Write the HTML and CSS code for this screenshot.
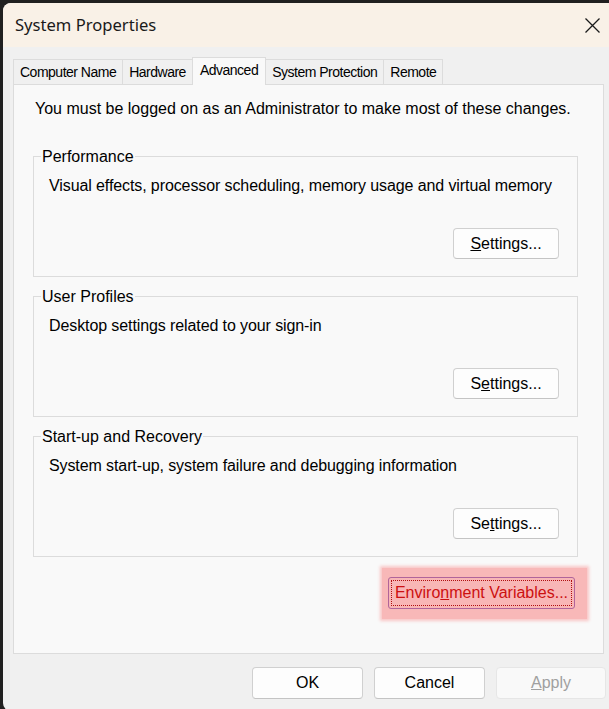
FILE: index.html
```html
<!DOCTYPE html>
<html>
<head>
<meta charset="utf-8">
<link rel="stylesheet" href="styles.css">
</head>
<body>
<div class="window">
  <div class="titlebar">
    <span class="title">System Properties</span>
    <span class="close">
      <svg width="15" height="15" viewBox="0 0 15 15"><path d="M0.5 0.5 L14.5 14.5 M14.5 0.5 L0.5 14.5" stroke="#1a1a1a" stroke-width="1.3" fill="none"/></svg>
    </span>
  </div>
  <div class="body">
    <div class="tabs">
      <div class="tab">Computer Name</div>
      <div class="tab">Hardware</div>
      <div class="tab selected">Advanced</div>
      <div class="tab">System Protection</div>
      <div class="tab">Remote</div>
    </div>
    <div class="panel">
      <p class="note">You must be logged on as an Administrator to make most of these changes.</p>
      <fieldset class="group">
        <legend>Performance</legend>
        <p class="desc">Visual effects, processor scheduling, memory usage and virtual memory</p>
        <div class="group-actions"><button class="btn settings"><u>S</u>ettings...</button></div>
      </fieldset>
      <fieldset class="group">
        <legend>User Profiles</legend>
        <p class="desc">Desktop settings related to your sign-in</p>
        <div class="group-actions"><button class="btn settings">S<u>e</u>ttings...</button></div>
      </fieldset>
      <fieldset class="group">
        <legend>Start-up and Recovery</legend>
        <p class="desc">System start-up, system failure and debugging information</p>
        <div class="group-actions"><button class="btn settings">Se<u>t</u>tings...</button></div>
      </fieldset>
      <div class="env-row">
        <span class="highlight"><button class="btn env"><span class="focus">Enviro<u>n</u>ment Variables...</span></button></span>
      </div>
    </div>
    <div class="footer">
      <button class="btn dlg">OK</button>
      <button class="btn dlg">Cancel</button>
      <button class="btn dlg disabled"><u>A</u>pply</button>
    </div>
  </div>
</div>
</body>
</html>
```
FILE: styles.css
```css
html, body {
  margin: 0;
  padding: 0;
}
body {
  background: #202020;
  overflow: hidden;
  width: 609px;
  height: 709px;
  font-family: "Liberation Sans", Arial, sans-serif;
  font-size: 16px;
  color: #000;
}
.window {
  margin: 3px 0 0 3px;
  width: 606px;
  height: 708px;
  background: #f0f0f0;
  border-radius: 8px 0 0 8px;
  overflow: hidden;
  display: flex;
  flex-direction: column;
}
.titlebar {
  height: 44px;
  flex: none;
  background: #f9f1e7;
  display: flex;
  align-items: center;
  justify-content: space-between;
  padding: 0 9px 0 12px;
}
.title {
  font-family: "Noto Sans", "Open Sans", sans-serif;
  font-size: 16.6px;
  color: #1a1a1a;
  margin-top: -1px;
}
.close {
  display: flex;
  margin-top: 1px;
}
.body {
  padding: 10px 3px 0 10px;
}
.tabs {
  display: flex;
  align-items: flex-end;
  height: 27px;
}
.tab {
  height: 24px;
  padding: 0 6px;
  line-height: 25px;
  font-size: 14px;
  letter-spacing: -0.5px;
  border: 1px solid #dcdcdc;
  border-bottom: none;
  background: #f0f0f0;
  margin-left: -1px;
  white-space: nowrap;
}
.tab:first-child {
  margin-left: 0;
}
.tab.selected {
  height: 27px;
  line-height: 24px;
  padding: 0 7px;
  background: #f9f9f9;
  margin-bottom: -1px;
  position: relative;
}
.panel {
  border: 1px solid #dcdcdc;
  background: #f9f9f9;
  padding: 15px 25px 0 19px;
  box-sizing: border-box;
  width: 591px;
  height: 570px;
}
.note {
  margin: 0 0 0 2px;
  line-height: 18px;
  white-space: nowrap;
}
.group {
  margin: 10px 0 0 0;
  padding: 12px 18px 17px 15px;
  border: 1px solid #dcdcdc;
  min-width: 0;
}
.panel .note + .group {
  margin-top: 29px;
}
.group legend {
  padding: 0 1px;
  margin-left: -8px;
  line-height: 18px;
  position: relative;
  top: 1px;
}
.desc {
  margin: 0;
  line-height: 18px;
  letter-spacing: -0.1px;
  white-space: nowrap;
}
.group-actions {
  display: flex;
  justify-content: flex-end;
  margin-top: 33px;
}
.btn {
  font-family: "Liberation Sans", Arial, sans-serif;
  font-size: 16px;
  color: #000;
  background: #fdfdfd;
  border: 1px solid #d0d0d0;
  border-bottom-color: #c4c4c4;
  border-radius: 4px;
  padding: 0;
  box-sizing: border-box;
}
.settings {
  width: 106px;
  height: 31px;
}
.env-row {
  display: flex;
  justify-content: flex-end;
  margin-top: 11px;
  margin-right: -9px;
}
.highlight {
  display: flex;
  padding: 9px 12px 10px 6px;
  background: #f8b8b8;
  box-shadow: 0 0 3px 2px #f9c6c6;
}
.env {
  width: 187px;
  height: 32px;
  background: #f8b6b6;
  border: 1px solid #b0649a;
  border-radius: 3px;
  color: #cc1010;
  padding: 2px;
  display: flex;
}
.env .focus {
  flex: 1;
  display: flex;
  align-items: center;
  justify-content: center;
  border: 1px dotted #b01010;
}
.footer {
  display: flex;
  justify-content: flex-end;
  gap: 11px;
  margin-top: 13px;
}
.dlg {
  width: 111px;
  height: 32px;
}
.dlg.disabled {
  background: #f9f9f9;
  border-color: #e6e6e6;
  color: #a0a0a0;
  width: 110px;
}
```
